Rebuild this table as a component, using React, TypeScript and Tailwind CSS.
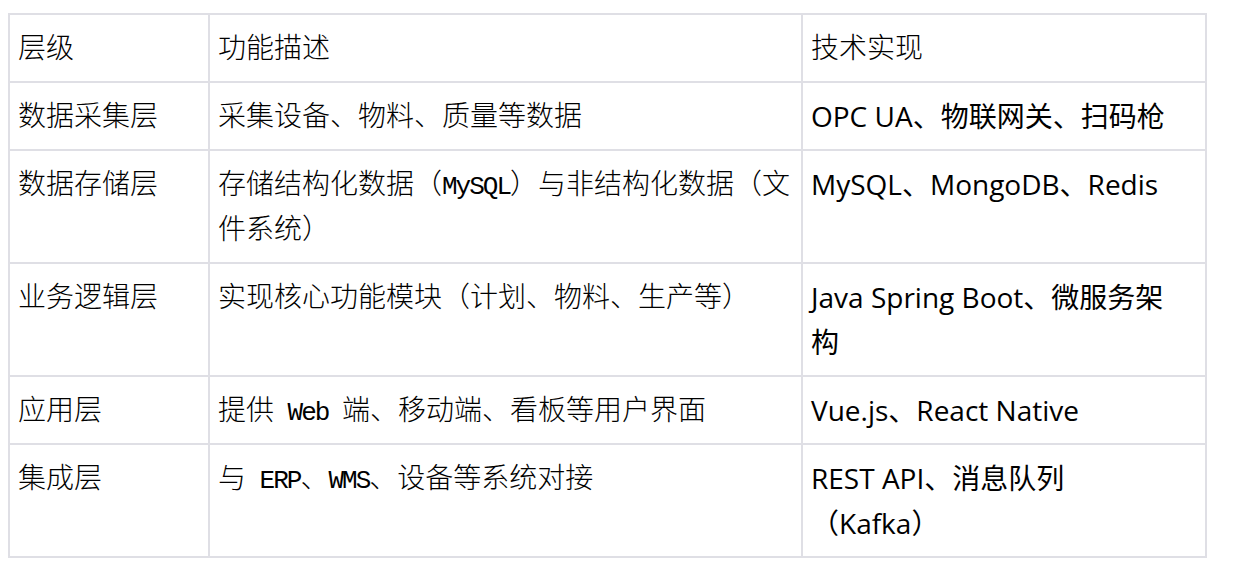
import type { ReactNode } from "react";

const song = "font-['Liberation_Serif','Noto_Sans_CJK_SC',serif] font-light";
const yahei = "font-['Open_Sans','Noto_Sans_CJK_SC',sans-serif]";

function L({ children }: { children: ReactNode }) {
  return (
    <span className="font-['Liberation_Mono',monospace] text-[26px] leading-none tracking-[-2px] font-normal whitespace-pre">
      {children}
    </span>
  );
}

const rows: { layer: string; desc: ReactNode; tech: ReactNode }[] = [
  { layer: "数据采集层", desc: "采集设备、物料、质量等数据", tech: "OPC UA、物联网关、扫码枪" },
  {
    layer: "数据存储层",
    desc: (
      <>
        存储结构化数据（<L>MySQL</L>）与非结构化数据（文
        <br />
        件系统）
      </>
    ),
    tech: "MySQL、MongoDB、Redis",
  },
  {
    layer: "业务逻辑层",
    desc: "实现核心功能模块（计划、物料、生产等）",
    tech: (
      <>
        Java Spring Boot、微服务架
        <br />构
      </>
    ),
  },
  {
    layer: "应用层",
    desc: (
      <>
        提供<L> Web </L>端、移动端、看板等用户界面
      </>
    ),
    tech: "Vue.js、React Native",
  },
  {
    layer: "集成层",
    desc: (
      <>
        与<L> ERP</L>、<L>WMS</L>、设备等系统对接
      </>
    ),
    tech: (
      <>
        REST API、消息队列
        <br />（Kafka）
      </>
    ),
  },
];

const cell = "border-r-2 border-b-2 border-[#dfdfe5] px-[8px] pt-[11px] pb-[10px] leading-[45px] whitespace-nowrap";

export default function App() {
  return (
    <div className="min-h-screen bg-white pt-[13px] pl-[8px] text-[28px] text-black">
      <div className="grid w-[1199px] grid-cols-[200px_593px_404px] border-t-2 border-l-2 border-[#dfdfe5]">
        <div className={`${cell} ${song}`}>层级</div>
        <div className={`${cell} ${song}`}>功能描述</div>
        <div className={`${cell} ${song}`}>技术实现</div>
        {rows.map((r) => (
          <div key={r.layer} className="contents">
            <div className={`${cell} ${song}`}>{r.layer}</div>
            <div className={`${cell} ${song}`}>{r.desc}</div>
            <div className={`${cell} ${yahei}`}>{r.tech}</div>
          </div>
        ))}
      </div>
    </div>
  );
}
